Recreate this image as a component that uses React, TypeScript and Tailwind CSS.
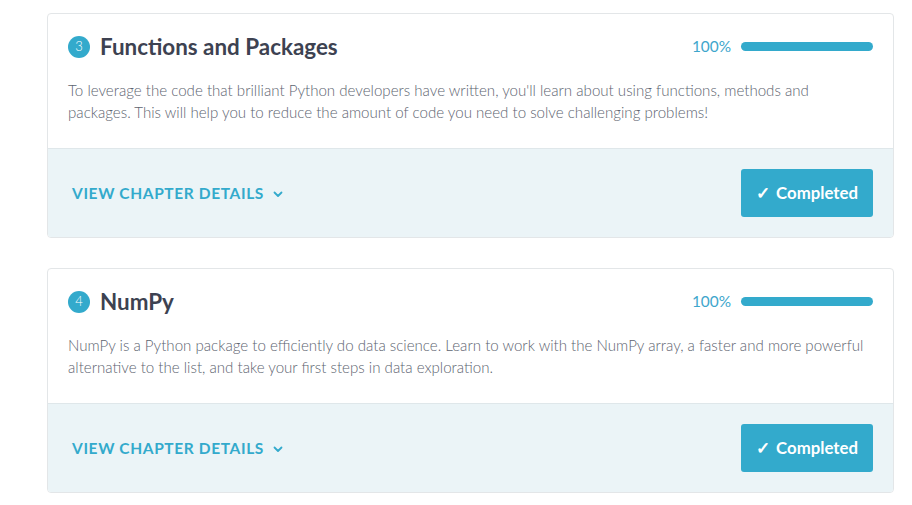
import React from "react";

type Chapter = { n: number; title: string; desc: string };

const chapters: Chapter[] = [
  {
    n: 3,
    title: "Functions and Packages",
    desc: "To leverage the code that brilliant Python developers have written, you'll learn about using functions, methods and packages. This will help you to reduce the amount of code you need to solve challenging problems!",
  },
  {
    n: 4,
    title: "NumPy",
    desc: "NumPy is a Python package to efficiently do data science. Learn to work with the NumPy array, a faster and more powerful alternative to the list, and take your first steps in data exploration.",
  },
];

function Card({ c }: { c: Chapter }) {
  return (
    <div className="rounded-[4px] border border-[#e3e6e8] bg-white overflow-hidden">
      <div className="px-5 pt-[17px] pb-[25px]">
        <div className="flex items-center justify-between h-8">
          <div className="flex items-center">
            <span className="flex h-[22px] w-[22px] items-center justify-center rounded-full bg-[#33aacc] text-[13px] font-light text-white">
              {c.n}
            </span>
            <h2 className="ml-[10px] text-[22.4px] font-bold leading-8 text-[#3d4251]">{c.title}</h2>
          </div>
          <div className="flex items-center">
            <span className="text-[15.4px] font-normal text-[#3ea6cc] mr-[10px]">100%</span>
            <div className="h-[9px] w-[132px] rounded-full bg-[#33aacc]" />
          </div>
        </div>
        <p className="mt-4 text-[15.1px] font-light leading-[22px] text-[#5d6470] pr-2">{c.desc}</p>
      </div>
      <div className="flex items-center justify-between border-t border-[#dfe7ea] bg-[#ebf4f7] pl-6 pr-5 pt-5 pb-5">
        <button className="flex items-center pt-[2px] text-[15.5px] font-bold tracking-[0.04em] text-[#33aacc]">
          VIEW CHAPTER DETAILS
          <svg className="ml-[9px]" width="10" height="7" viewBox="0 0 10 7" fill="none">
            <path d="M1.5 1.5 L5 5 L8.5 1.5" stroke="#33aacc" strokeWidth="1.8" strokeLinecap="round" strokeLinejoin="round" />
          </svg>
        </button>
        <button className="flex h-12 w-[132px] items-center justify-center rounded-[3px] bg-[#33aacc] text-[16.8px] font-bold text-white">
          <span className="mr-[6px]">✓</span>Completed
        </button>
      </div>
    </div>
  );
}

export default function App() {
  return (
    <div className="min-h-[505px] bg-white pt-[13px] pl-[47px] pr-[18px]" style={{ fontFamily: "Lato, 'Noto Sans', sans-serif" }}>
      <div className="flex w-[847px] flex-col gap-[30px]">
        {chapters.map((c) => (
          <Card key={c.n} c={c} />
        ))}
      </div>
    </div>
  );
}
